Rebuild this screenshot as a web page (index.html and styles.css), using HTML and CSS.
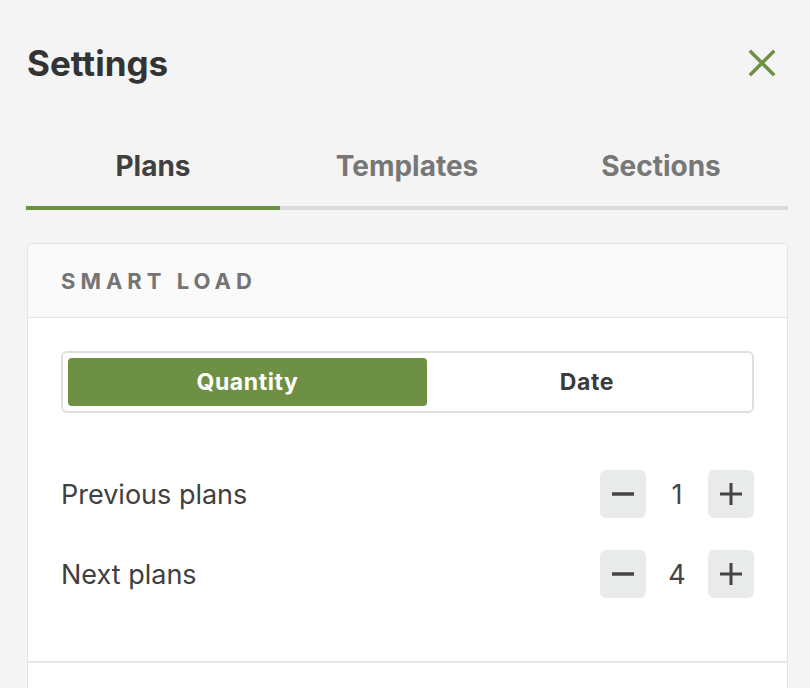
FILE: index.html
```html
<!DOCTYPE html>
<html lang="en">
<head>
    <meta charset="UTF-8">
    <title>Settings</title>
    <link rel="stylesheet" href="styles.css">
</head>
<body>

<div class="panel">
    <div class="header">
        <h1>Settings</h1>
        <button class="close" aria-label="Close">
            <svg width="28" height="28" viewBox="0 0 28 28">
                <path d="M3 3 L25 25 M25 3 L3 25" stroke="#6e9045" stroke-width="3.5" stroke-linecap="square"/>
            </svg>
        </button>
    </div>

    <div class="tabs">
        <div class="tab active">Plans</div>
        <div class="tab">Templates</div>
        <div class="tab">Sections</div>
    </div>

    <div class="card">
        <div class="card-head">Smart load</div>
        <div class="card-body">
            <div class="segment">
                <button class="seg-btn selected">Quantity</button>
                <button class="seg-btn">Date</button>
            </div>

            <div class="row">
                <span class="label">Previous plans</span>
                <div class="stepper">
                    <button class="step"><svg width="24" height="24" viewBox="0 0 24 24"><path d="M1 12 H23" stroke="#444" stroke-width="3.5"/></svg></button>
                    <span class="value">1</span>
                    <button class="step"><svg width="24" height="24" viewBox="0 0 24 24"><path d="M1 12 H23 M12 1 V23" stroke="#444" stroke-width="3"/></svg></button>
                </div>
            </div>

            <div class="row">
                <span class="label">Next plans</span>
                <div class="stepper">
                    <button class="step"><svg width="24" height="24" viewBox="0 0 24 24"><path d="M1 12 H23" stroke="#444" stroke-width="3.5"/></svg></button>
                    <span class="value">4</span>
                    <button class="step"><svg width="24" height="24" viewBox="0 0 24 24"><path d="M1 12 H23 M12 1 V23" stroke="#444" stroke-width="3"/></svg></button>
                </div>
            </div>
        </div>
        <div class="card-next"></div>
    </div>
</div>

</body>
</html>
```

FILE: styles.css
```css
body {
    background-color: #f4f4f4;
    color: #3b3b3b;
    font-family: 'Inter', 'Roboto', sans-serif;
    margin: 0;
    overflow: hidden;
}
.panel {
    padding: 0 22px 0 26px;
}
.header {
    height: 126px;
    display: flex;
    align-items: center;
    justify-content: space-between;
}
h1 {
    margin: 0;
    font-size: 35px;
    font-weight: 700;
    color: #333;
    padding-left: 1px;
}
.close {
    background: none;
    border: none;
    padding: 0;
    margin-right: 12px;
    display: flex;
    cursor: pointer;
}
.tabs {
    display: grid;
    grid-template-columns: 1fr 1fr 1fr;
}
.tab {
    height: 80px;
    display: flex;
    align-items: center;
    justify-content: center;
    font-size: 28px;
    font-weight: 700;
    color: #777;
    border-bottom: 4px solid #dcdcdc;
}
.tab.active {
    color: #404040;
    border-bottom-color: #6e9045;
}
.card {
    margin: 33px 0 0 1px;
    background-color: #fff;
    border: 1px solid #e3e3e3;
    border-radius: 5px;
}
.card-head {
    height: 73px;
    display: flex;
    align-items: center;
    padding-left: 33px;
    background-color: #fafafa;
    border-bottom: 1px solid #e3e3e3;
    border-radius: 5px 5px 0 0;
    text-transform: uppercase;
    font-size: 22px;
    font-weight: 700;
    letter-spacing: 5px;
    color: #747474;
}
.card-body {
    padding: 33px 33px 63px 33px;
    border-bottom: 2px solid #e6e6e6;
}
.segment {
    display: flex;
    border: 2px solid #dfdfdf;
    border-radius: 6px;
    padding: 5px;
    margin-bottom: 57px;
}
.seg-btn {
    height: 48px;
    border: none;
    background: none;
    border-radius: 4px;
    font-family: inherit;
    font-size: 23px;
    font-weight: 700;
    letter-spacing: 0.6px;
    color: #3b3b3b;
    flex: 1;
}
.seg-btn.selected {
    flex: 0 0 359px;
    background-color: #6e9045;
    color: #fff;
}
.row {
    display: flex;
    align-items: center;
    justify-content: space-between;
    height: 48px;
    margin-bottom: 32px;
}
.row:last-child {
    margin-bottom: 0;
}
.label {
    font-size: 27px;
    color: #404040;
}
.stepper {
    display: flex;
    align-items: center;
}
.step {
    width: 46px;
    height: 48px;
    border: none;
    border-radius: 6px;
    background-color: #e9eaea;
    display: flex;
    align-items: center;
    justify-content: center;
    padding: 0;
}
.value {
    width: 62px;
    text-align: center;
    font-size: 27px;
    color: #444;
}
.card-next {
    height: 40px;
}
```
